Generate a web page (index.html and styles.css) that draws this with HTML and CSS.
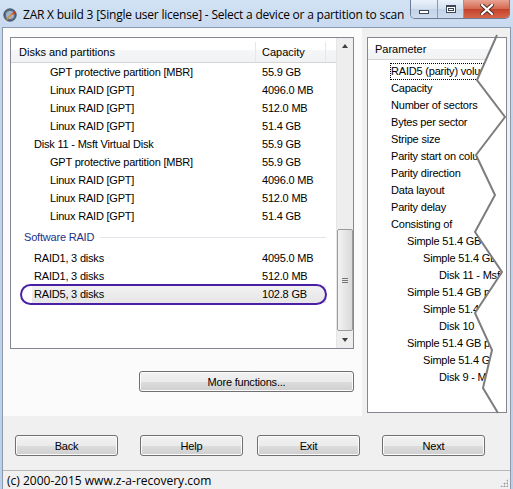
FILE: index.html
```html
<!DOCTYPE html>
<html lang="en">
<head>
    <meta charset="UTF-8">
    <title>ZAR X build 3</title>
    <link rel="stylesheet" href="styles.css">
</head>
<body>
<div class="window">
    <div class="titlebar">
        <svg class="app-icon" width="14" height="14" viewBox="0 0 14 14">
            <circle cx="7" cy="7" r="6.2" fill="#5b6f86" stroke="#2f3b4a" stroke-width="0.8"/>
            <circle cx="7" cy="7" r="4" fill="#9fb3c8"/>
            <path d="M7 7 L12 3 L12.5 6 Z" fill="#c8402a"/>
            <path d="M3 11 L9 5 L10 6 L4 12 Z" fill="#e08a2c"/>
        </svg>
        <span class="title">ZAR X build 3 [Single user license] - Select a device or a partition to scan</span>
        <div class="caption">
            <div class="cap-btn cap-min"><span></span></div>
            <div class="cap-btn cap-max"><span></span></div>
            <div class="cap-btn cap-close">
                <svg width="14" height="11" viewBox="0 0 14 11">
                    <path d="M2 1 L12 10 M12 1 L2 10" stroke="#4a2a24" stroke-width="4" stroke-linecap="square"/>
                    <path d="M2 1 L12 10 M12 1 L2 10" stroke="#ffffff" stroke-width="2.2" stroke-linecap="square"/>
                </svg>
            </div>
        </div>
    </div>

    <div class="client">
        <div class="main">
            <div class="left-pane">
                <div class="listview">
                    <div class="lv-body">
                        <div class="lv-header">
                            <div class="col-name">Disks and partitions</div>
                            <div class="col-cap">Capacity</div>
                            <div class="col-fill"></div>
                        </div>
                        <div class="row lvl2"><span class="name">GPT protective partition [MBR]</span><span class="cap">55.9 GB</span></div>
                        <div class="row lvl2"><span class="name">Linux RAID [GPT]</span><span class="cap">4096.0 MB</span></div>
                        <div class="row lvl2"><span class="name">Linux RAID [GPT]</span><span class="cap">512.0 MB</span></div>
                        <div class="row lvl2"><span class="name">Linux RAID [GPT]</span><span class="cap">51.4 GB</span></div>
                        <div class="row lvl1"><span class="name">Disk 11 - Msft Virtual Disk</span><span class="cap">55.9 GB</span></div>
                        <div class="row lvl2"><span class="name">GPT protective partition [MBR]</span><span class="cap">55.9 GB</span></div>
                        <div class="row lvl2"><span class="name">Linux RAID [GPT]</span><span class="cap">4096.0 MB</span></div>
                        <div class="row lvl2"><span class="name">Linux RAID [GPT]</span><span class="cap">512.0 MB</span></div>
                        <div class="row lvl2"><span class="name">Linux RAID [GPT]</span><span class="cap">51.4 GB</span></div>
                        <div class="group"><span>Software RAID</span><i></i></div>
                        <div class="row lvl1"><span class="name">RAID1, 3 disks</span><span class="cap">4095.0 MB</span></div>
                        <div class="row lvl1"><span class="name">RAID1, 3 disks</span><span class="cap">512.0 MB</span></div>
                        <div class="row lvl1 selected"><span class="name">RAID5, 3 disks</span><span class="cap">102.8 GB</span><div class="mark"></div></div>
                    </div>
                    <div class="scrollbar">
                        <div class="sb-arrow sb-up"></div>
                        <div class="sb-track"><div class="sb-thumb"><span></span></div></div>
                        <div class="sb-arrow sb-down"></div>
                    </div>
                </div>
                <div class="more-row">
                    <button class="btn btn-more">More functions...</button>
                </div>
            </div>

            <div class="right-pane">
                <div class="paramlist">
                    <div class="pl-header">Parameter</div>
                    <div class="pl-rows">
                        <div class="prow p1 focus"><span>RAID5 (parity) volume</span></div>
                        <div class="prow p1">Capacity</div>
                        <div class="prow p1">Number of sectors</div>
                        <div class="prow p1">Bytes per sector</div>
                        <div class="prow p1">Stripe size</div>
                        <div class="prow p1">Parity start on column</div>
                        <div class="prow p1">Parity direction</div>
                        <div class="prow p1">Data layout</div>
                        <div class="prow p1">Parity delay</div>
                        <div class="prow p1">Consisting of</div>
                        <div class="prow p2">Simple 51.4 GB partition</div>
                        <div class="prow p3">Simple 51.4 GB</div>
                        <div class="prow p4">Disk 11 - Msft Virtual Disk</div>
                        <div class="prow p2">Simple 51.4 GB partition</div>
                        <div class="prow p3">Simple 51.4 GB</div>
                        <div class="prow p4">Disk 10</div>
                        <div class="prow p2">Simple 51.4 GB partition</div>
                        <div class="prow p3">Simple 51.4 GB</div>
                        <div class="prow p4">Disk 9 - Msft Virtual Disk</div>
                    </div>
                    <svg class="tear" width="140" height="376" viewBox="0 0 140 376">
                        <polygon points="129,1 110,43 138,80 109,118 128,158 108,195 135,235 108,276 125,313 116,351 130,374 139,374 139,1" fill="#ffffff"/>
                        <polyline points="130,-2 110,43 138,80 109,118 128,158 108,195 135,235 108,276 125,313 116,351 131,376" fill="none" stroke="#7d7d7d" stroke-width="2"/>
                    </svg>
                </div>
            </div>
        </div>

        <div class="nav">
            <button class="btn btn-back">Back</button>
            <button class="btn btn-help">Help</button>
            <button class="btn btn-exit">Exit</button>
            <button class="btn btn-next">Next</button>
        </div>

        <div class="statusbar">
            <span>(c) 2000-2015 www.z-a-recovery.com</span>
            <div class="grip"></div>
        </div>
    </div>
</div>
</body>
</html>
```

FILE: styles.css
```css
* { box-sizing: border-box; }
body { margin: 0; width: 513px; height: 489px; overflow: hidden; font-family: "Liberation Sans", Arial, sans-serif; font-size: 11px; color: #000; }

.window { width: 513px; height: 489px; display: flex; flex-direction: column; background: linear-gradient(#d3e2f4, #c3d6ee 40px, #bcd0ea); }

/* title bar */
.titlebar { height: 27px; flex-shrink: 0; display: flex; align-items: flex-start; position: relative; }
.app-icon { margin: 8px 0 0 3px; }
.title { margin: 7px 0 0 6px; font-family: "Open Sans", sans-serif; font-size: 12px; letter-spacing: -0.22px; white-space: nowrap; line-height: 16px; }
.caption { position: absolute; top: 0; left: 410px; display: flex; height: 19px; border: 1px solid #6b7c96; border-top: none; border-radius: 0 0 5px 5px; overflow: hidden; }
.cap-btn { height: 18px; display: flex; align-items: center; justify-content: center; }
.cap-min, .cap-max { width: 27px; background: linear-gradient(#eaf1fa, #d3e0f0 50%, #c3d3e8 51%, #cfdcee); border-right: 1px solid #8b9ab1; }
.cap-max { width: 26px; }
.cap-min span { width: 10px; height: 4px; margin-top: 5px; background: #fff; border: 1px solid #3c4656; }
.cap-max span { width: 10px; height: 8px; background: #fff; border: 1px solid #3c4656; box-shadow: inset 0 0 0 1px #fff, inset 0 0 0 2px #3c4656; border-top-width: 2px; }
.cap-close { width: 45px; background: linear-gradient(#e9a493, #d3674f 50%, #c2412a 51%, #d8664b); }

/* client */
.client { flex: 1; margin: 0 2px; border: 1px solid #8e9aab; border-bottom: none; background: #f0f0f0; display: flex; flex-direction: column; }
.main { display: flex; height: 388px; }

.left-pane { width: 359px; background: #fbfbfb; padding: 9px 0 0 7px; }
.listview { width: 344px; height: 312px; border: 1px solid #828790; background: #fff; display: flex; }
.lv-body { width: 325px; }
.lv-header { display: flex; height: 25px; border-bottom: 1px solid #d5d5d5; background: linear-gradient(#ffffff, #ffffff 50%, #f5f6f8 51%, #f1f2f4); line-height: 20px; padding-top: 4px; }
.col-name { width: 245px; padding-left: 8px; border-right: 1px solid #e3e8ee; }
.col-cap { width: 70px; padding-left: 6px; border-right: 1px solid #e3e8ee; }
.col-fill { flex: 1; }

.row { display: flex; height: 18px; line-height: 18px; position: relative; letter-spacing: -0.2px; }
.row .name { width: 245px; white-space: nowrap; position: relative; }
.row .cap { padding-left: 6px; position: relative; }
.lvl1 .name { padding-left: 23px; }
.lvl2 .name { padding-left: 39px; }
.group { height: 24px; display: flex; align-items: center; padding-left: 13px; color: #1e3287; letter-spacing: -0.2px; }
.group i { flex: 1; height: 1px; margin: 1px 10px 0 6px; background: #e2e6ec; }
.selected::before { content: ""; position: absolute; left: 21px; right: 10px; top: 0; bottom: 0; background: linear-gradient(#f2f2f2, #e6e6e6); }
.mark { position: absolute; left: 9px; right: 9px; top: -1px; bottom: -2px; border: 2px solid #4a1fa6; border-radius: 11px; }

.scrollbar { width: 17px; display: flex; flex-direction: column; background: #eeeeee; border-left: 1px solid #e6e6e6; }
.sb-arrow { height: 17px; position: relative; }
.sb-up::after, .sb-down::after { content: ""; position: absolute; left: 5px; border-left: 3px solid transparent; border-right: 3px solid transparent; }
.sb-up::after { top: 6px; border-bottom: 4px solid #3f3f3f; }
.sb-down::after { top: 7px; border-top: 4px solid #3f3f3f; }
.sb-track { flex: 1; display: flex; flex-direction: column; justify-content: flex-end; }
.sb-thumb { height: 102px; border: 1px solid #9b9b9b; border-radius: 2px; background: linear-gradient(90deg, #f3f3f3, #e6e6e6 50%, #d9d9d9); display: flex; align-items: center; justify-content: center; }
.sb-thumb span { width: 6px; height: 5px; border-top: 1px solid #777; border-bottom: 1px solid #777; position: relative; }
.sb-thumb span::after { content: ""; position: absolute; left: 0; right: 0; top: 1px; height: 1px; background: #777; }

.more-row { width: 344px; display: flex; justify-content: flex-end; margin-top: 22px; }

/* buttons */
.btn { height: 21px; padding: 0; border: 1px solid #707070; border-radius: 3px; background: linear-gradient(#f2f2f2, #ebebeb 50%, #dddddd 51%, #cfcfcf); box-shadow: inset 0 0 0 1px #fbfbfb; font-family: "Liberation Sans", Arial, sans-serif; font-size: 11px; letter-spacing: -0.2px; color: #000; }
.btn-more { width: 215px; }

/* right parameter list */
.right-pane { flex: 1; padding: 9px 0 0 5px; }
.paramlist { width: 140px; height: 376px; border: 1px solid #828790; background: #fff; position: relative; }
.pl-header { height: 22px; line-height: 19px; padding: 2px 0 0 7px; border-bottom: 1px solid #d5d5d5; background: linear-gradient(#ffffff, #ffffff 50%, #f5f6f8 51%, #f1f2f4); }
.pl-rows { padding-top: 3px; }
.prow { height: 17px; line-height: 17px; white-space: nowrap; overflow: hidden; letter-spacing: -0.2px; }
.p1 { padding-left: 23px; }
.p2 { padding-left: 39px; }
.p3 { padding-left: 55px; }
.p4 { padding-left: 71px; }
.focus { padding-left: 22px; }
.focus span { display: inline-block; height: 17px; line-height: 15px; border: 1px dotted #000; }
.tear { position: absolute; left: -1px; top: -1px; overflow: visible; }

/* bottom buttons */
.nav { display: flex; margin-top: 19px; }
.nav .btn { width: 103px; }
.btn-back { margin-left: 12px; }
.btn-help { margin-left: 22px; }
.btn-exit { margin-left: 14px; }
.btn-next { margin-left: 22px; }

.statusbar { margin-top: 14px; flex: 1; border-top: 1px solid #b9b9b9; display: flex; align-items: center; padding-left: 4px; position: relative; font-family: "Open Sans", sans-serif; font-size: 12px; letter-spacing: 0; }
.grip { position: absolute; right: 2px; bottom: 2px; width: 8px; height: 8px; background: radial-gradient(circle, #9a9a9a 0.8px, transparent 1.2px) 0 0 / 3px 3px; clip-path: polygon(100% 0, 100% 100%, 0 100%); }
```
